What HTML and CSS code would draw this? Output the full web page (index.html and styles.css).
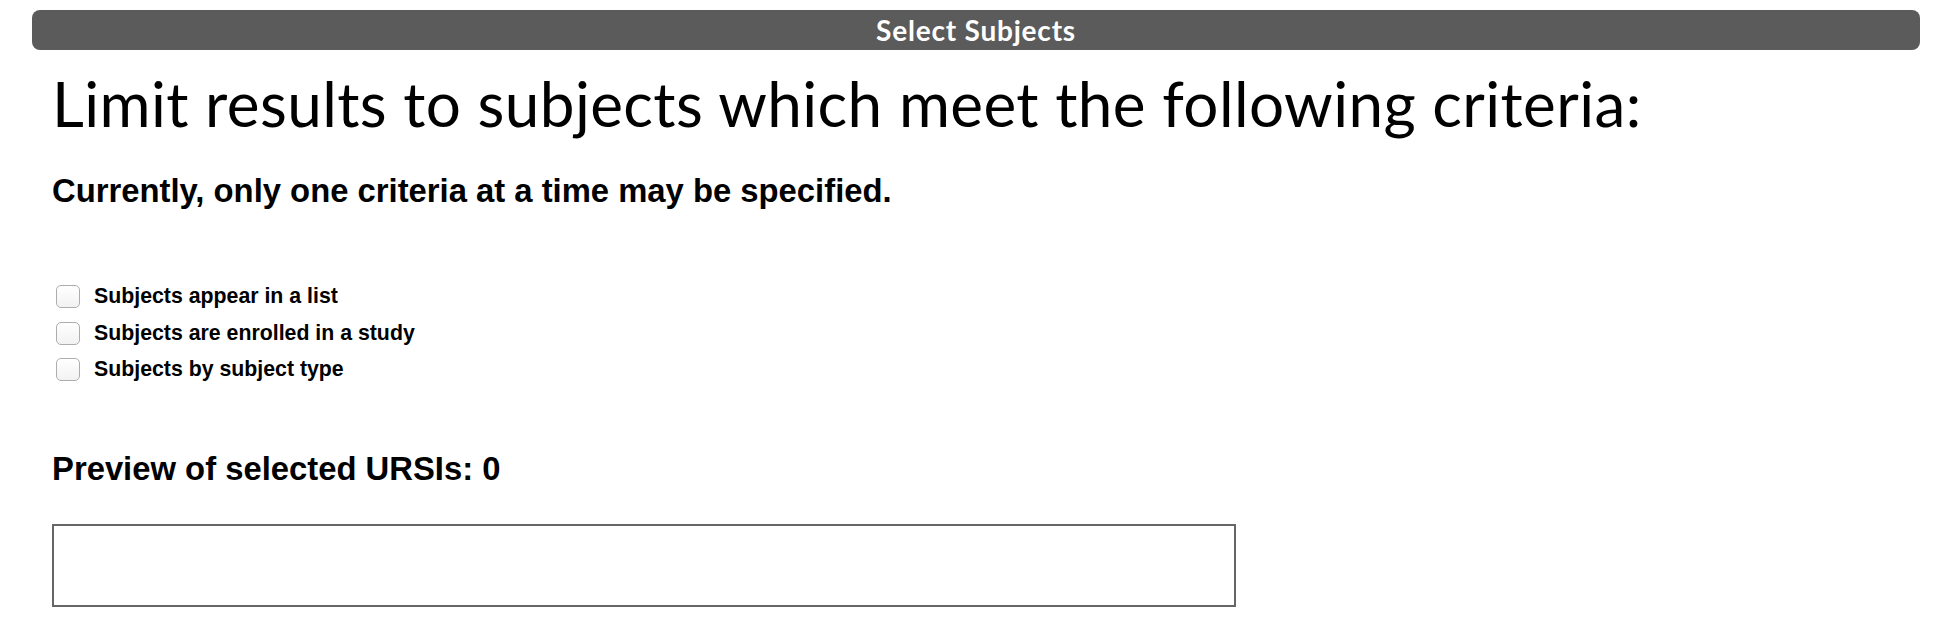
FILE: index.html
```html
<!DOCTYPE html>
<html lang="en">
<head>
<meta charset="utf-8">
<title>Select Subjects</title>
<link rel="stylesheet" href="styles.css">
</head>
<body>
<div class="page">
  <div class="titlebar">Select Subjects</div>
  <div class="content">
    <h1 class="lead">Limit results to subjects which meet the following criteria:</h1>
    <h3 class="note">Currently, only one criteria at a time may be specified.</h3>
    <div class="criteria">
      <label class="crit"><span class="box"></span><span class="crit-text">Subjects appear in a list</span></label>
      <label class="crit"><span class="box"></span><span class="crit-text">Subjects are enrolled in a study</span></label>
      <label class="crit"><span class="box"></span><span class="crit-text">Subjects by subject type</span></label>
    </div>
    <h3 class="note preview-title">Preview of selected URSIs: 0</h3>
    <div class="preview"></div>
  </div>
</div>
</body>
</html>
```
FILE: styles.css
```css
html, body {
  margin: 0;
  padding: 0;
  background: #ffffff;
}

.page {
  padding: 10px 32px 0 32px;
  font-family: "Liberation Sans", Arial, sans-serif;
  color: #000;
}

.titlebar {
  height: 40px;
  line-height: 40px;
  background: #5b5b5b;
  border-radius: 8px;
  color: #fff;
  text-align: center;
  font-family: Lato, "Open Sans", sans-serif;
  font-weight: 700;
  font-size: 28px;
  letter-spacing: 0.8px;
}

.content {
  padding: 0 20px;
}

.lead {
  margin: 16px 0 0 0;
  font-family: Lato, "Open Sans", sans-serif;
  font-weight: 400;
  font-size: 62px;
  letter-spacing: 0.4px;
  line-height: 1.2;
  white-space: nowrap;
}

.note {
  margin: 33px 0 0 0;
  font-family: "Liberation Sans", Arial, sans-serif;
  font-weight: 700;
  font-size: 32.8px;
  line-height: 36px;
}

.criteria {
  margin-top: 69px;
  display: flex;
  flex-direction: column;
}

.crit {
  display: flex;
  align-items: center;
  height: 36.5px;
  font-weight: 700;
  font-size: 21.3px;
}

.box {
  width: 22px;
  height: 21px;
  margin-left: 4px;
  border: 1px solid #adadad;
  border-radius: 5px;
  background: linear-gradient(#ffffff, #f2f2f2);
  box-shadow: inset 0 1px 0 #fff;
  flex: none;
}

.crit-text {
  margin-left: 14px;
}

.preview-title {
  margin-top: 63.5px;
}

.preview {
  margin-top: 36.5px;
  width: 1180px;
  height: 79px;
  border: 2px solid #666666;
}
```
